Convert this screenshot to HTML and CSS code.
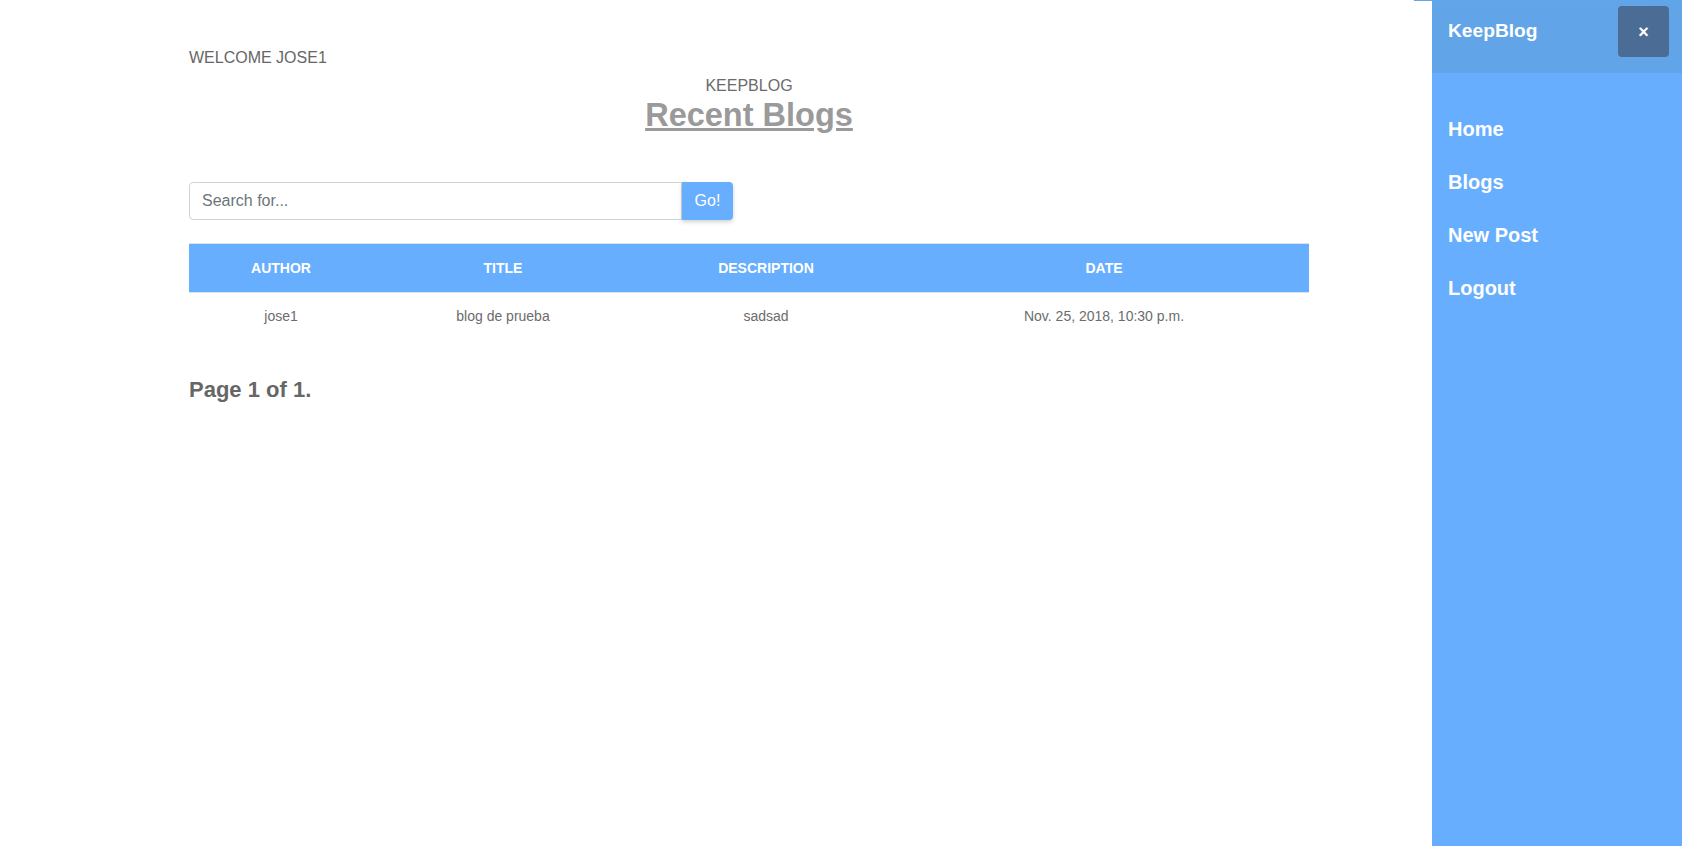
FILE: index.html
```html
<!DOCTYPE html>
<html lang="en">
<head>
<meta charset="utf-8">
<title>KeepBlog</title>
<link rel="stylesheet" href="styles.css">
</head>
<body>
<div class="topline"></div>
<div class="page">
  <main class="main">
    <div class="container">
      <p class="welcome">WELCOME JOSE1</p>
      <div class="heading">
        <div class="brand">KEEPBLOG</div>
        <h1 class="title">Recent Blogs</h1>
      </div>
      <form class="search">
        <input class="search-input" type="text" placeholder="Search for...">
        <button class="search-btn" type="button">Go!</button>
      </form>
      <table class="blogs">
        <thead>
          <tr>
            <th class="c-author">AUTHOR</th>
            <th class="c-title">TITLE</th>
            <th class="c-desc">DESCRIPTION</th>
            <th class="c-date">DATE</th>
          </tr>
        </thead>
        <tbody>
          <tr>
            <td>jose1</td>
            <td>blog de prueba</td>
            <td>sadsad</td>
            <td>Nov. 25, 2018, 10:30 p.m.</td>
          </tr>
        </tbody>
      </table>
      <h5 class="pager">Page 1 of 1.</h5>
    </div>
  </main>
  <aside class="sidebar">
    <div class="side-head">
      <span class="side-brand">KeepBlog</span>
      <button class="close-btn" type="button">×</button>
    </div>
    <nav class="side-nav">
      <a class="side-link" href="#">Home</a>
      <a class="side-link" href="#">Blogs</a>
      <a class="side-link" href="#">New Post</a>
      <a class="side-link" href="#">Logout</a>
    </nav>
  </aside>
</div>
</body>
</html>
```
FILE: styles.css
```css
* { box-sizing: border-box; }
html, body { margin: 0; padding: 0; height: 100%; }
body {
  font-family: "Liberation Sans", Arial, sans-serif;
  font-size: 16px;
  line-height: 1.5;
  color: #666;
  background: #fff;
}
.topline {
  position: absolute;
  top: 0;
  left: 1414px;
  width: 236px;
  height: 1px;
  background: #62a5e8;
  z-index: 2;
}
.page {
  display: flex;
  height: 846px;
}
.main {
  flex: 1;
  padding-left: 189px;
}
.container {
  width: 1120px;
}
.welcome {
  margin: 46px 0 4px;
  line-height: 24px;
}
.heading {
  text-align: center;
}
.brand {
  line-height: 24px;
  color: #6b6b6b;
}
.title {
  margin: 0;
  font-size: 32.5px;
  font-weight: bold;
  line-height: 34px;
  color: #9a9a9a;
  text-decoration: underline;
}
.search {
  display: flex;
  margin: 50px 0 0;
  height: 38px;
}
.search-input {
  width: 493px;
  height: 38px;
  padding: 6px 12px;
  font-family: inherit;
  font-size: 16px;
  color: #495057;
  border: 1px solid #ced4da;
  border-radius: 4px 0 0 4px;
  outline: none;
}
.search-input::placeholder { color: #6c757d; }
.search-btn {
  width: 51px;
  height: 38px;
  padding: 0;
  font-family: inherit;
  font-size: 16px;
  color: #fff;
  background: #68aefe;
  border: none;
  border-radius: 0 4px 4px 0;
  box-shadow: 0 2px 4px rgba(0,0,0,0.18);
}
.blogs {
  width: 1120px;
  margin-top: 23px;
  border-collapse: collapse;
  font-size: 14px;
}
.blogs th {
  height: 49px;
  padding: 0;
  background: #68aefe;
  color: #fff;
  font-weight: bold;
  text-align: center;
  vertical-align: middle;
  border-top: 1px solid #dee2e6;
  border-bottom: 1px solid #dee2e6;
}
.c-author { width: 184px; }
.c-title { width: 260px; }
.c-desc { width: 266px; }
.c-date { width: 410px; }
.blogs td {
  padding: 13px 0 11px;
  line-height: 21px;
  text-align: center;
  color: #6c6c6c;
}
.pager {
  margin: 39px 0 0;
  font-size: 22px;
  font-weight: bold;
  line-height: 26px;
  color: #666;
}
.sidebar {
  width: 250px;
  flex: none;
  background: #68aefe;
}
.side-head {
  display: flex;
  align-items: center;
  justify-content: space-between;
  height: 73px;
  padding: 6px 13px 16px 16px;
  background: #62a4e8;
}
.side-brand {
  font-size: 19.2px;
  font-weight: bold;
  color: #fff;
}
.close-btn {
  width: 51px;
  height: 51px;
  padding: 0;
  border: none;
  border-radius: 4px;
  background: #4b6d95;
  color: #fff;
  font-family: inherit;
  font-size: 18px;
  font-weight: bold;
  line-height: 1;
}
.side-nav {
  display: flex;
  flex-direction: column;
  padding-top: 30px;
}
.side-link {
  display: block;
  padding: 14px 16px;
  font-size: 20px;
  font-weight: bold;
  line-height: 25px;
  color: #fff;
  text-decoration: none;
}
```
